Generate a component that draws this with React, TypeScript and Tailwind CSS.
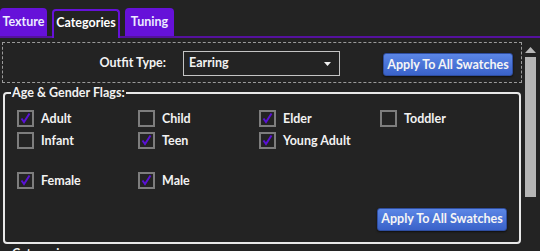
import React from "react";

const FONT = { fontFamily: 'Lato, "Noto Sans", sans-serif' };

function Check({ checked, label }: { checked: boolean; label: string }) {
  return (
    <div className="flex items-center gap-[7px] h-[17px]">
      <div className="w-[17px] h-[17px] border-2 border-[#7d7d7d] bg-[#232323] flex items-center justify-center shrink-0">
        {checked && (
          <svg width="13" height="13" viewBox="0 0 13 13">
            <path d="M2.5 6.5 L5 10 L10.5 1.5" stroke="#5a12d6" strokeWidth="2" fill="none" />
          </svg>
        )}
      </div>
      <span className="text-[12.5px] font-bold text-[#f2f2f2] leading-none whitespace-nowrap pt-[2px]">{label}</span>
    </div>
  );
}

function BlueButton({ children }: { children: React.ReactNode }) {
  return (
    <button className="w-[130px] h-[23px] rounded-[3px] bg-gradient-to-b from-[#5b86e6] to-[#3a62c9] border border-[#2f4ea0] text-[12.5px] font-bold text-[#f5f5f5] shadow-[0_1px_2px_rgba(0,0,0,0.6)] leading-none whitespace-nowrap">
      {children}
    </button>
  );
}

export default function App() {
  const row1 = [
    { label: "Adult", checked: true },
    { label: "Child", checked: false },
    { label: "Elder", checked: true },
    { label: "Toddler", checked: false },
  ];
  const row2 = [
    { label: "Infant", checked: false },
    { label: "Teen", checked: true },
    { label: "Young Adult", checked: true },
  ];
  const row3 = [
    { label: "Female", checked: true },
    { label: "Male", checked: true },
  ];

  return (
    <div className="w-[540px] h-[251px] overflow-hidden bg-[#232323] text-white" style={FONT}>
      {/* tabs */}
      <div className="flex items-end h-[38px] border-b-2 border-[#55119e] gap-[5px]">
        <div className="h-[28px] w-[47px] bg-[#6611d9] rounded-t-[4px] flex items-center justify-center text-[12.5px] font-bold text-[#ececff]">
          Texture
        </div>
        <div className="h-[29px] w-[68px] bg-[#232323] border-2 border-b-0 border-[#6611d9] rounded-t-[4px] flex items-center justify-center text-[12.5px] font-bold text-white mb-[-2px] pb-[2px]">
          Categories
        </div>
        <div className="h-[28px] w-[49px] bg-[#6611d9] rounded-t-[4px] flex items-center justify-center text-[12.5px] font-bold text-[#ececff]">
          Tuning
        </div>
      </div>

      <div className="flex">
        <div className="w-[522px] pl-[2px] pt-[4px]">
          {/* outfit type row */}
          <div className="w-[520px] h-[41px] border border-dashed border-[#9a9a9a] flex items-center pt-[2px]">
            <span className="w-[163px] text-right text-[12.5px] font-bold text-[#f2f2f2]">Outfit Type:</span>
            <div className="ml-[17px] w-[157px] h-[25px] border border-[#c4c4c4] flex items-center justify-between pl-[5px] pr-[8px]">
              <span className="text-[12.5px] font-bold text-[#f2f2f2]">Earring</span>
              <svg width="7" height="4" viewBox="0 0 7 4">
                <path d="M0 0 L7 0 L3.5 4 Z" fill="#f0f0f0" />
              </svg>
            </div>
            <div className="ml-[43px]">
              <BlueButton>Apply To All Swatches</BlueButton>
            </div>
          </div>

          {/* group box */}
          <fieldset className="mt-[3px] ml-[1px] w-[518px] h-[158px] border-2 border-[#e8e8e8] rounded-[4px] px-[12px] pb-[10px]">
            <legend className="ml-[-6px] px-[1px] text-[12.5px] font-bold text-[#f2f2f2] leading-[13px]">
              Age &amp; Gender Flags:
            </legend>
            <div className="grid grid-cols-[121px_121px_121px_121px] gap-y-[5px] mt-[11px]">
              {row1.map((c) => (
                <Check key={c.label} {...c} />
              ))}
              {row2.map((c) => (
                <Check key={c.label} {...c} />
              ))}
            </div>
            <div className="grid grid-cols-[121px_121px_121px_121px] mt-[23px]">
              {row3.map((c) => (
                <Check key={c.label} {...c} />
              ))}
            </div>
            <div className="flex justify-end mt-[19px]">
              <BlueButton>Apply To All Swatches</BlueButton>
            </div>
          </fieldset>
          <div className="ml-[10px] mt-[4px] text-[12.5px] font-bold text-[#f2f2f2] leading-none">Categories</div>
        </div>

        {/* scrollbar */}
        <div className="w-[16px] flex flex-col items-center pt-[9px]">
          <svg width="11" height="6" viewBox="0 0 11 6">
            <path d="M0 6 L5.5 0 L11 6 Z" fill="#b8b8b8" />
          </svg>
          <div className="mt-[4px] w-[11px] h-[140px] bg-[#b5b5b5]" />
        </div>
      </div>
    </div>
  );
}
